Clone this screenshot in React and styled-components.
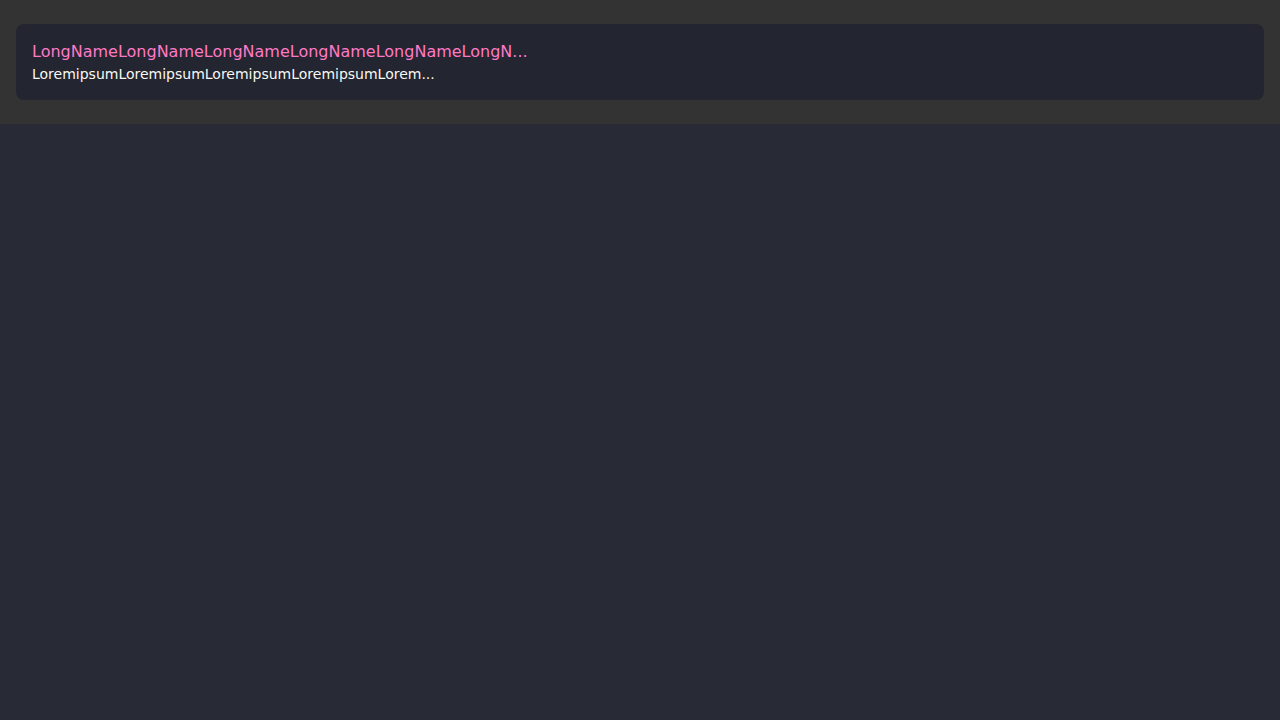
import React from "react";
import styled, { createGlobalStyle } from "styled-components";

const Global = createGlobalStyle`
  html, body { margin: 0; padding: 0; background: #282a36; }
  body { font-family: "DejaVu Sans", sans-serif; min-height: 720px; }
`;

const Header = styled.header`
  background: #333333;
  padding: 24px 16px;
`;

const Card = styled.div`
  background: #232531;
  border-radius: 8px;
  padding: 16px;
  display: flex;
  flex-direction: column;
`;

const Title = styled.div`
  color: #ff79c6;
  font-size: 16px;
  line-height: 24px;
  white-space: nowrap;
`;

const Subtitle = styled.div`
  color: #f8f8f2;
  font-size: 14px;
  line-height: 20px;
  white-space: nowrap;
`;

const truncate = (s, n = 45) => (s.length > n ? s.slice(0, n) + "..." : s);

export default function App() {
  const name = "LongName".repeat(8);
  const desc = "Loremipsum".repeat(8);
  return (
    <>
      <Global />
      <Header>
        <Card>
          <Title>{truncate(name)}</Title>
          <Subtitle>{truncate(desc)}</Subtitle>
        </Card>
      </Header>
    </>
  );
}
